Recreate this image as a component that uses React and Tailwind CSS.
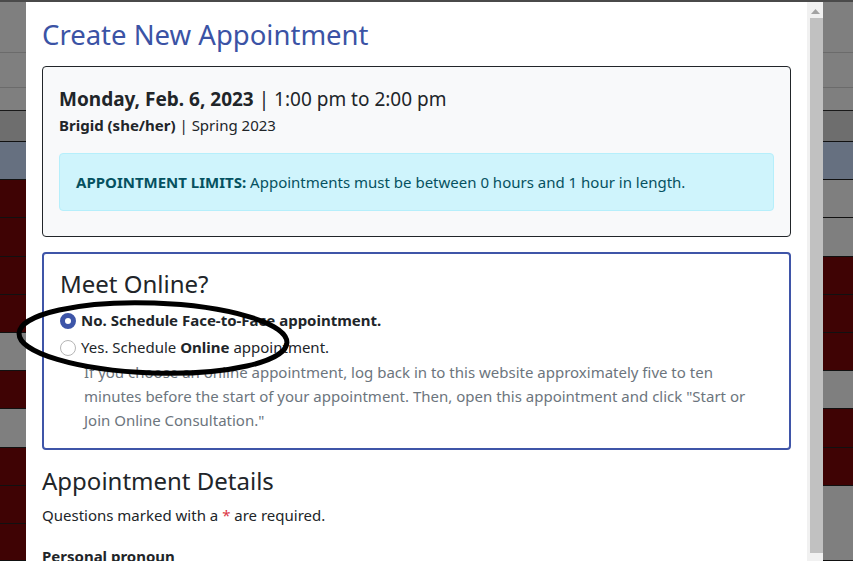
import React from "react";

const leftRows = [
  { h: "h-[51px]", c: "bg-[#7f7f7f] border-[#6b6b6b]" },
  { h: "h-[35px]", c: "bg-[#7f7f7f] border-[#6b6b6b]" },
  { h: "h-[23px]", c: "bg-[#7f7f7f] border-[#1a1a1a]" },
  { h: "h-[31px]", c: "bg-[#6e6e6e] border-[#111]" },
  { h: "h-[38px]", c: "bg-[#667080] border-[#111]" },
  { h: "h-[38px]", c: "bg-[#3f0304] border-[#111]" },
  { h: "h-[39px]", c: "bg-[#3f0304] border-[#111]" },
  { h: "h-[38px]", c: "bg-[#3f0304] border-[#111]" },
  { h: "h-[38px]", c: "bg-[#3f0304] border-[#111]" },
  { h: "h-[38px]", c: "bg-[#7f7f7f] border-[#111]" },
  { h: "h-[38px]", c: "bg-[#3f0304] border-[#111]" },
  { h: "h-[39px]", c: "bg-[#7f7f7f] border-[#111]" },
  { h: "h-[38px]", c: "bg-[#3f0304] border-[#111]" },
  { h: "h-[38px]", c: "bg-[#3f0304] border-[#111]" },
  { h: "h-[37px]", c: "bg-[#3f0304] border-[#111]" },
];

const rightRows = [
  { h: "h-[51px]", c: "bg-[#7f7f7f] border-[#6b6b6b]" },
  { h: "h-[35px]", c: "bg-[#7f7f7f] border-[#6b6b6b]" },
  { h: "h-[23px]", c: "bg-[#7f7f7f] border-[#1a1a1a]" },
  { h: "h-[31px]", c: "bg-[#6e6e6e] border-[#111]" },
  { h: "h-[38px]", c: "bg-[#667080] border-[#111]" },
  { h: "h-[38px]", c: "bg-[#7f7f7f] border-[#111]" },
  { h: "h-[39px]", c: "bg-[#7f7f7f] border-[#111]" },
  { h: "h-[38px]", c: "bg-[#3f0304] border-[#111]" },
  { h: "h-[38px]", c: "bg-[#3f0304] border-[#111]" },
  { h: "h-[38px]", c: "bg-[#3f0304] border-[#111]" },
  { h: "h-[38px]", c: "bg-[#7f7f7f] border-[#111]" },
  { h: "h-[39px]", c: "bg-[#3f0304] border-[#111]" },
  { h: "h-[38px]", c: "bg-[#3f0304] border-[#111]" },
  { h: "h-[75px]", c: "bg-[#7f7f7f] border-[#111]" },
];

const Strip = ({ rows, width }) => (
  <div className={`flex flex-col shrink-0 ${width}`}>
    {rows.map((r, i) => (
      <div key={i} className={`${r.h} ${r.c} border-b shrink-0`}></div>
    ))}
  </div>
);

const Radio = ({ checked }) =>
  checked ? (
    <span className="w-4 h-4 rounded-full border-[5px] border-[#3d55a8] bg-white shrink-0 mt-[5px]"></span>
  ) : (
    <span className="w-4 h-4 rounded-full border border-[#b5b5b5] bg-white shrink-0 mt-[5px]"></span>
  );

const App = () => {
  return (
    <div
      className="relative w-[853px] h-[561px] overflow-hidden flex border-t-2 border-[#4a4a4a] bg-[#7f7f7f] text-[#212529] text-[16px] leading-6"
      style={{ fontFamily: '"Noto Sans", "Open Sans", sans-serif' }}
    >
      <Strip rows={leftRows} width="w-[26px]" />

      {/* modal body */}
      <div className="w-[781px] shrink-0 bg-white px-4 pt-[16px]">
        <h3 className="text-[27.5px] leading-[1.2] text-[#3b53a5] mb-[15px]">
          Create New Appointment
        </h3>

        <div className="border border-[#212529] rounded bg-[#f8f9fa] px-4 pt-[20px] pb-[25px]">
          <div className="text-[19px] leading-6">
            <span className="font-bold">Monday, Feb. 6, 2023</span> | 1:00 pm
            to 2:00 pm
          </div>
          <div className="text-[15px] leading-6 mt-[2px]">
            <span className="font-bold">Brigid (she/her)</span> | Spring 2023
          </div>
          <div className="mt-[16px] bg-[#cff4fc] border border-[#b6effb] rounded px-4 py-4 text-[#055160] text-[15px]">
            <span className="font-bold">APPOINTMENT LIMITS:</span> Appointments
            must be between 0 hours and 1 hour in length.
          </div>
        </div>

        <div className="mt-[15px] border-2 border-[#3f55a8] rounded px-4 pt-[16px] pb-[16px]">
          <h4 className="text-[24px] leading-[1.2] mb-[9px]">Meet Online?</h4>
          <div className="flex gap-[5px] min-h-6 mb-[3px]">
            <Radio checked />
            <span className="font-bold text-[15px]">
              No. Schedule Face-to-Face appointment.
            </span>
          </div>
          <div className="flex gap-[5px] min-h-6 mb-[1px]">
            <Radio />
            <span className="text-[15px]">
              Yes. Schedule <span className="font-bold">Online</span>{" "}
              appointment.
            </span>
          </div>
          <p className="pl-6 text-[#6c757d] text-[15px]">
            If you choose an online appointment, log back in to this website
            approximately five to ten
            <br />
            minutes before the start of your appointment. Then, open this
            appointment and click "Start or
            <br />
            Join Online Consultation."
          </p>
        </div>

        <h4 className="text-[24px] leading-[1.2] mt-[17px] mb-[7px]">
          Appointment Details
        </h4>
        <p className="text-[15px]">
          Questions marked with a <span className="text-[#dc3545]">*</span> are
          required.
        </p>
        <p className="text-[15px] font-bold mt-[17px]">Personal pronoun</p>
      </div>

      {/* scrollbar */}
      <div className="w-4 shrink-0 bg-[#f1f1f1] flex flex-col items-center pt-[7px] pb-2">
        <svg width="9" height="5" viewBox="0 0 9 5">
          <polygon points="0,5 4.5,0 9,5" fill="#a3a3a3" />
        </svg>
        <div className="mt-[4px] w-[13px] flex-1 bg-[#c1c1c1] ml-[2px]"></div>
      </div>

      <Strip rows={rightRows} width="flex-1" />

      {/* hand-drawn annotation */}
      <svg
        className="absolute left-0 top-0 pointer-events-none"
        width="853"
        height="561"
      >
        <ellipse
          cx="153"
          cy="336"
          rx="134"
          ry="35"
          transform="rotate(2 153 336)"
          fill="none"
          stroke="#000"
          strokeWidth="5"
        />
      </svg>
    </div>
  );
};

export default App;
